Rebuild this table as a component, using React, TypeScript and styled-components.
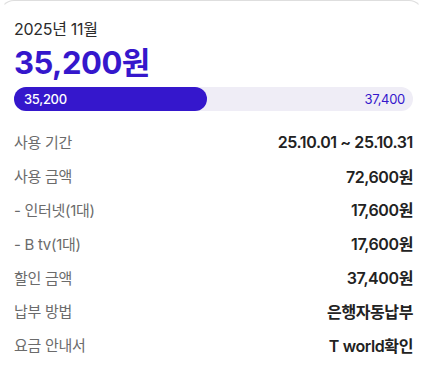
import React from "react";
import styled, { createGlobalStyle } from "styled-components";

const GlobalStyle = createGlobalStyle`
  body {
    margin: 0;
    background: #ffffff;
    font-family: "Inter", "Noto Sans CJK KR", sans-serif;
  }
`;

const Card = styled.div`
  box-sizing: border-box;
  width: 423px;
  min-height: 390px;
  border-top: 1.5px solid #dedede;
  border-left: 1px solid transparent;
  border-right: 1px solid transparent;
  border-radius: 14px;
  padding: 17px 9px 0 13px;
  background: #fff;
`;

const Month = styled.div`
  font-size: 16px;
  line-height: 22px;
  color: #2b2b2b;
  letter-spacing: -0.3px;
`;

const Total = styled.div`
  margin-top: 4px;
  font-size: 31px;
  line-height: 38px;
  font-weight: 700;
  color: #3517cc;
  letter-spacing: -0.5px;
`;

const Track = styled.div`
  position: relative;
  margin-top: 5px;
  height: 24px;
  border-radius: 12px;
  background: #efedf6;
  display: flex;
  align-items: center;
  justify-content: flex-end;
  padding-right: 8px;
`;

const Fill = styled.div`
  position: absolute;
  left: 0;
  top: 0;
  bottom: 0;
  border-radius: 12px;
  background: #3517cc;
  display: flex;
  align-items: center;
  padding-left: 10px;
  box-sizing: border-box;
`;

const BarLabel = styled.span<{ $light?: boolean }>`
  font-size: 13px;
  font-weight: ${(p) => (p.$light ? 500 : 400)};
  color: ${(p) => (p.$light ? "#ffffff" : "#3517cc")};
  letter-spacing: -0.3px;
`;

const List = styled.div`
  margin-top: 14px;
  display: flex;
  flex-direction: column;
`;

const Row = styled.div`
  display: flex;
  justify-content: space-between;
  align-items: center;
  height: 33.8px;
`;

const Label = styled.span`
  font-size: 15px;
  color: #6b6b6b;
  letter-spacing: -0.3px;
`;

const Value = styled.span`
  font-size: 16px;
  font-weight: 600;
  color: #222;
  letter-spacing: -0.4px;
`;

const rows: [string, string][] = [
  ["사용 기간", "25.10.01 ~ 25.10.31"],
  ["사용 금액", "72,600원"],
  ["- 인터넷(1대)", "17,600원"],
  ["- B tv(1대)", "17,600원"],
  ["할인 금액", "37,400원"],
  ["납부 방법", "은행자동납부"],
  ["요금 안내서", "T world확인"],
];

export default function App() {
  const used = 35200;
  const discount = 37400;
  const pct = (used / (used + discount)) * 100;
  return (
    <>
      <GlobalStyle />
      <Card>
        <Month>2025년 11월</Month>
        <Total>35,200원</Total>
        <Track>
          <Fill style={{ width: `${pct}%` }}>
            <BarLabel $light>35,200</BarLabel>
          </Fill>
          <BarLabel>37,400</BarLabel>
        </Track>
        <List>
          {rows.map(([k, v]) => (
            <Row key={k}>
              <Label>{k}</Label>
              <Value>{v}</Value>
            </Row>
          ))}
        </List>
      </Card>
    </>
  );
}
